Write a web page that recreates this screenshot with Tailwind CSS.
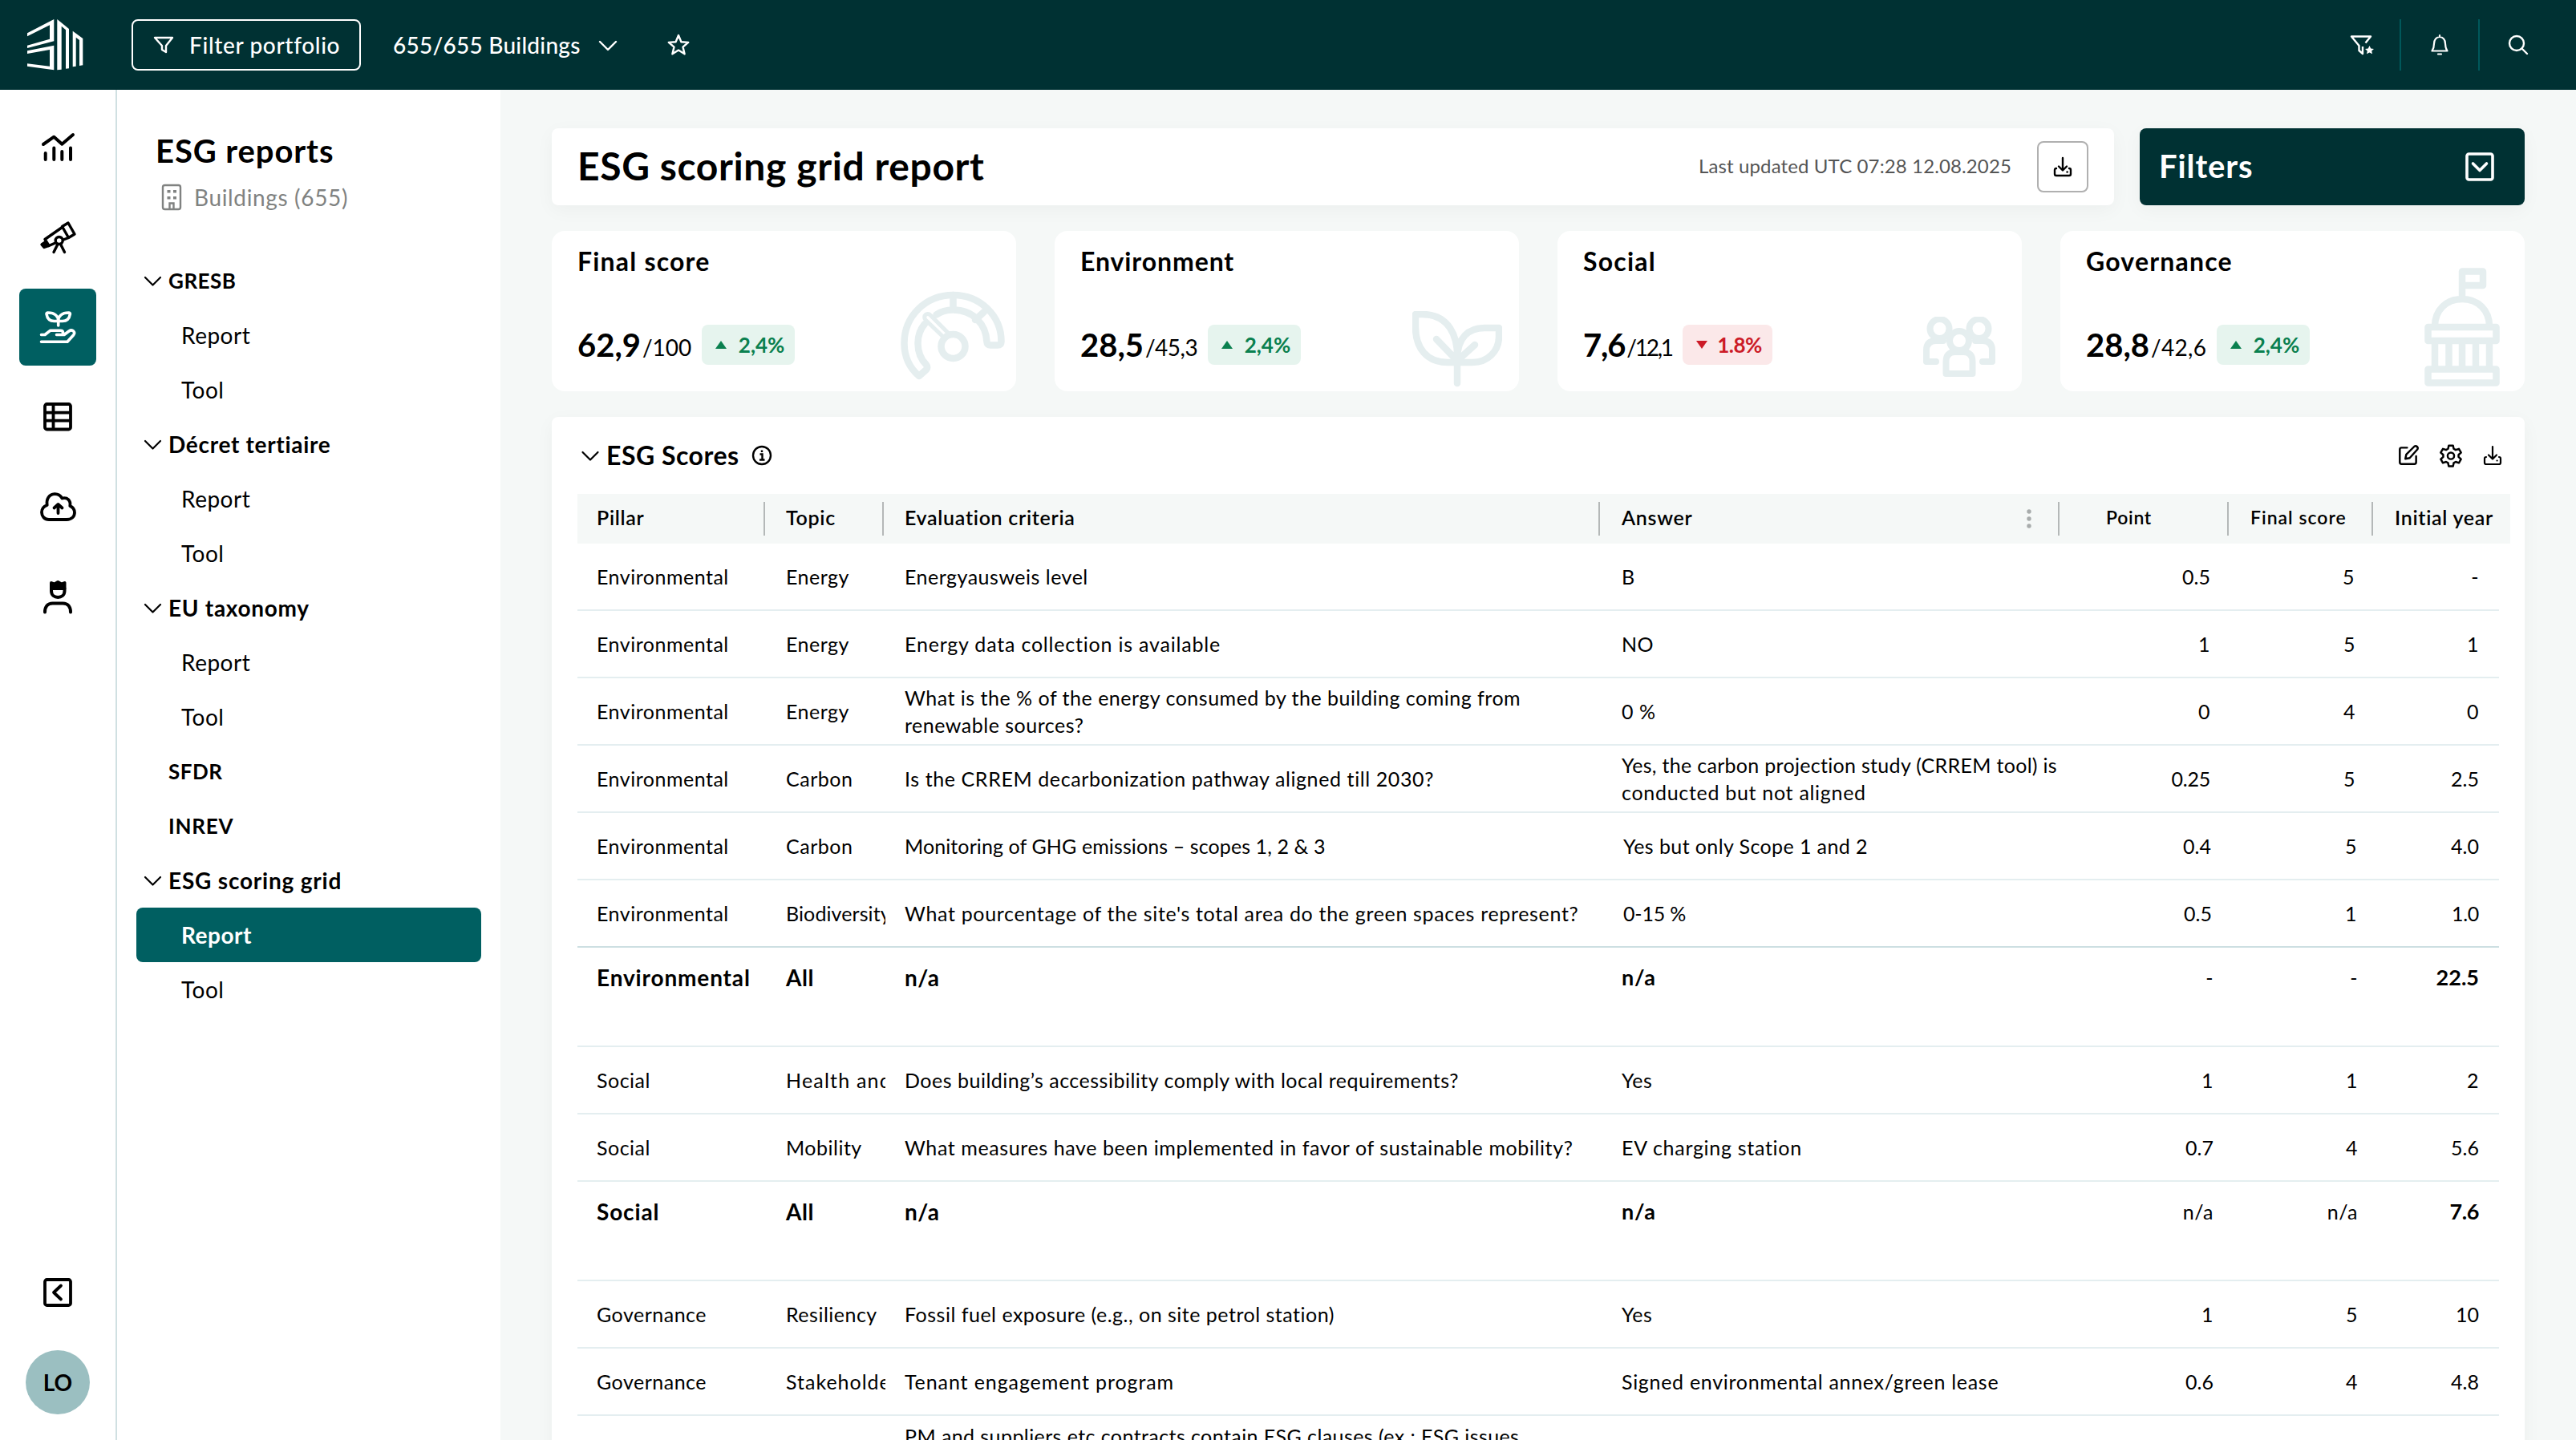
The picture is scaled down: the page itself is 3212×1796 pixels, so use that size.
<!DOCTYPE html>
<html lang="en">
<head>
  <meta charset="UTF-8">
  <title>ESG scoring grid report</title>
  <script src="https://cdn.jsdelivr.net/npm/@tailwindcss/browser@4"></script>
</head>
<body class="h-screen overflow-hidden bg-[#f5f8f7] font-[Lato,'Open_Sans',sans-serif] text-[28px] text-black flex flex-col">

  <!-- Top bar -->
  <header class="h-28 shrink-0 bg-[#003133] text-white flex items-center pl-[34px] pr-[56px]">
    <svg class="w-[70px] h-16" viewBox="0 0 70 64" fill="currentColor">
      <path d="M33.3 0L0 17.3v4L28 7.3v17.4L0 32.7V36l33.3-8.7z" />
      <path d="M0 39.3l33.3-6.6v30.6L0 58.7v-3.4l28 3.4V38L0 43z" />
      <path d="M37.3 0L52 12v49.3l-4 .5V13.3l-5.3-4.6v54l-5.4.6z" />
      <path d="M56.7 14.7L69.3 24v33.3L65 58V26l-4.3-3.3v36l-4 .6z" />
    </svg>
    <button class="ml-[60px] w-[286px] h-16 border-2 border-white rounded-lg flex items-center pl-[24px] font-medium">
      <svg class="w-7 h-7 mr-[18px]" viewBox="0 0 28 28" fill="none" stroke="currentColor" stroke-width="2.4" stroke-linejoin="round">
        <path d="M3 5h22l-8 10v8l-5-3v-5z" />
      </svg>
      <span class="whitespace-nowrap tracking-[0.65px]">Filter portfolio</span>
    </button>
    <span class="ml-[40px] w-[234px] font-medium whitespace-nowrap tracking-[0.25px]">655/655 Buildings</span>
    <svg class="ml-[20px] w-7 h-7" viewBox="0 0 28 28" fill="none" stroke="currentColor" stroke-width="2.4" stroke-linecap="round" stroke-linejoin="round">
      <path d="M4 10l10 10 10-10" />
    </svg>
    <svg class="ml-[58px] w-8 h-8" viewBox="0 0 32 32" fill="none" stroke="currentColor" stroke-width="2.4" stroke-linejoin="round">
      <path d="M16 4l3.4 8.2 8.8.7-6.7 5.7 2.1 8.7-7.6-4.7-7.6 4.7 2.1-8.7-6.7-5.7 8.8-.7z" />
    </svg>
    <div class="ml-auto flex items-center">
      <svg class="w-8 h-8" viewBox="0 0 32 32" fill="none" stroke="currentColor" stroke-width="2.4" stroke-linejoin="round">
        <path d="M18 18v9l-4.500-4V17L4 5.500h24l-6.500 8" />
        <path d="M26.500 17l1.700 3.500 3.800.4-2.800 2.600.8 3.800-3.500-1.900-3.500 1.900.8-3.800-2.800-2.600 3.800-.4z" fill="currentColor" stroke="none" />
      </svg>
      <span class="ml-[32px] w-0.5 h-16 bg-[#00585b]"></span>
      <svg class="mx-[32px] w-8 h-8" viewBox="0 0 32 32" fill="none" stroke="currentColor" stroke-width="2.2" stroke-linecap="round" stroke-linejoin="round">
        <path d="M16 4v2M6.500 23.500h19c-2-3-2.500-5-2.500-9 0-5-3-8.500-7-8.500s-7 3.500-7 8.500c0 4-.5 6-2.500 9zM14 27.500h4" />
      </svg>
      <span class="w-0.5 h-16 bg-[#00585b]"></span>
      <svg class="ml-[32px] w-8 h-8" viewBox="0 0 32 32" fill="none" stroke="currentColor" stroke-width="2.4" stroke-linecap="round">
        <circle cx="14" cy="14" r="9" />
        <path d="M20.500 20.500l6.500 6.500" />
      </svg>
    </div>
  </header>

  <div class="flex flex-1 min-h-0">

    <!-- Icon rail -->
    <nav class="w-[146px] shrink-0 bg-white border-r-2 border-[#d0e0e2] flex flex-col items-center pt-6 pb-8">
      <div class="flex flex-col gap-4">
        <a class="w-24 h-24 rounded-lg flex items-center justify-center">
          <svg class="w-12 h-12" viewBox="0 0 48 48" fill="none" stroke="currentColor" stroke-width="4" stroke-linecap="round" stroke-linejoin="round">
            <path d="M6 20l13.300-9.300 10 9L43 8M8.700 31v8M19.300 24.500V39M29.300 29v10M40 24.500V39" />
          </svg>
        </a>
        <a class="w-24 h-24 rounded-lg flex items-center justify-center">
          <svg class="w-12 h-12" viewBox="0 0 48 48" fill="none" stroke="currentColor" stroke-width="3.400" stroke-linecap="round" stroke-linejoin="round">
            <path d="M29.500 10.500L37 6l8 14-7.500 4.500zM29.500 11.500L8 26.500l5 8 8-3.500M31 27l6.500-2.500" />
            <path d="M4 33l4.500-3 3 5-4.500 1.500z" fill="currentColor" />
            <circle cx="25.700" cy="28" r="4.500" />
            <path d="M23.500 33.500l-4.500 9M28 33.500l4.500 9" />
          </svg>
        </a>
        <a class="w-24 h-24 rounded-lg flex items-center justify-center bg-[#005f61] text-white">
          <svg class="w-12 h-12" viewBox="0 0 48 48" fill="none" stroke="currentColor" stroke-width="3.600" stroke-linecap="round" stroke-linejoin="round">
            <path d="M24.700 22v-6M24.700 16.500c0-6-4-10.500-13-10.500-1.200 0-1.700.5-1.700 1.700 1 6 4.500 8.800 9.500 8.800zM24.700 16.500c0-6 4-10.500 13-10.500 1.200 0 1.700.5 1.700 1.700-1 6-4.500 8.800-9.500 8.800z" />
            <path d="M3.500 33.500H8l6.500-5.200h13c4 0 4 5.200.5 5.200h-5.500 9.500l6-4.500c4.500-3 8.500 1.500 5.500 5l-7.500 8.300H3.500" />
          </svg>
        </a>
        <a class="w-24 h-24 rounded-lg flex items-center justify-center">
          <svg class="w-12 h-12" viewBox="0 0 48 48" fill="none" stroke="currentColor" stroke-width="3.800" stroke-linejoin="round">
            <rect x="8" y="8" width="32" height="31.500" rx="2.500" />
            <path d="M18.500 8v31M8 18.700h32M8 28.700h32" />
          </svg>
        </a>
        <a class="w-24 h-24 rounded-lg flex items-center justify-center">
          <svg class="w-12 h-12" viewBox="0 0 48 48" fill="none" stroke="currentColor" stroke-width="3.800" stroke-linecap="round" stroke-linejoin="round">
            <path d="M13 40h22c6.500 0 10-4 10-8.800 0-4-2.500-6.700-5.700-8.200 1.200-7-3.300-11-9.800-9.500C27 9.500 23.500 8 20 8.200 13 8.700 9.500 14.500 10.700 22 6.500 23.500 4 26.500 4 31c0 5 3.500 9 9 9z" />
            <path d="M24.500 32V21.500M19.500 25.500l5-4.500 5 4.500" />
          </svg>
        </a>
        <a class="w-24 h-24 rounded-lg flex items-center justify-center">
          <svg class="w-12 h-12" viewBox="0 0 48 48" fill="none" stroke="currentColor" stroke-width="4" stroke-linecap="round" stroke-linejoin="round">
            <path d="M16 14v3c0 10.500 16.500 10.500 16.500 0v-3z" />
            <path d="M16 7l4 1.500 4.200-2.500 4.300 2.500 4-1.500v7H16z" fill="currentColor" />
            <path d="M8 43.500c0-7 3.500-11 9.500-11h13c6 0 9.500 4 9.500 11" />
          </svg>
        </a>
      </div>
      <div class="mt-auto flex flex-col items-center gap-12">
        <svg class="w-12 h-12" viewBox="0 0 48 48" fill="none" stroke="currentColor" stroke-width="3.800" stroke-linecap="round" stroke-linejoin="round">
          <rect x="8" y="8" width="32" height="32" rx="2.500" />
          <path d="M28 15.500L19 24l9 8.500" />
        </svg>
        <div class="w-20 h-20 rounded-full bg-[#9bbfc1] flex items-center justify-center font-bold">LO</div>
      </div>
    </nav>

    <!-- Section navigation -->
    <aside class="w-[478px] shrink-0 bg-white px-6 pt-[52px]">
      <h2 class="pl-[24px] text-[40px] leading-[48px] font-bold tracking-[0.9px]">ESG reports</h2>
      <div class="mt-[14px] pl-[30px] h-10 flex items-center text-[#808281] tracking-[0.65px]">
        <svg class="w-7 h-9 mr-[14px]" viewBox="0 0 28 36" fill="none" stroke="currentColor" stroke-width="2.400">
          <rect x="3" y="3" width="22" height="30" rx="2.500" />
          <path d="M11.500 33v-7.500h5V33" />
          <path d="M8.500 9h4v3.500h-4zM16 9h4v3.500h-4zM8.500 17h4v3.500h-4zM16 17h4v3.500h-4z" fill="currentColor" stroke="none" />
        </svg>
        Buildings (655)
      </div>
      <ul class="mt-[50px] leading-[68px] tracking-[0.5px]">
        <li class="h-[68px] flex items-center gap-2 pl-2 font-bold text-[26px]">
          <svg class="w-6 h-6" viewBox="0 0 24 24" fill="none" stroke="currentColor" stroke-width="2.200" stroke-linecap="round" stroke-linejoin="round"><path d="M3 8l9.500 9.500L22 8" /></svg>
          GRESB
        </li>
        <li class="h-[68px] pl-[56px]">Report</li>
        <li class="h-[68px] pl-[56px]">Tool</li>
        <li class="h-[68px] flex items-center gap-2 pl-2 font-bold tracking-[0.7px]">
          <svg class="w-6 h-6" viewBox="0 0 24 24" fill="none" stroke="currentColor" stroke-width="2.200" stroke-linecap="round" stroke-linejoin="round"><path d="M3 8l9.500 9.500L22 8" /></svg>
          Décret tertiaire
        </li>
        <li class="h-[68px] pl-[56px]">Report</li>
        <li class="h-[68px] pl-[56px]">Tool</li>
        <li class="h-[68px] flex items-center gap-2 pl-2 font-bold tracking-[0.7px]">
          <svg class="w-6 h-6" viewBox="0 0 24 24" fill="none" stroke="currentColor" stroke-width="2.200" stroke-linecap="round" stroke-linejoin="round"><path d="M3 8l9.500 9.500L22 8" /></svg>
          EU taxonomy
        </li>
        <li class="h-[68px] pl-[56px]">Report</li>
        <li class="h-[68px] pl-[56px]">Tool</li>
        <li class="h-[68px] pl-10 font-bold text-[26px]">SFDR</li>
        <li class="h-[68px] pl-10 font-bold text-[26px] tracking-[0.8px]">INREV</li>
        <li class="h-[68px] flex items-center gap-2 pl-2 font-bold tracking-[0.8px]">
          <svg class="w-6 h-6" viewBox="0 0 24 24" fill="none" stroke="currentColor" stroke-width="2.200" stroke-linecap="round" stroke-linejoin="round"><path d="M3 8l9.500 9.500L22 8" /></svg>
          ESG scoring grid
        </li>
        <li class="h-[68px] pl-[56px] rounded-lg bg-[#005f61] text-white font-bold">Report</li>
        <li class="h-[68px] pl-[56px]">Tool</li>
      </ul>
    </aside>

    <main class="flex-1 min-w-0 pl-16 pr-16 pt-12 flex flex-col gap-8">

      <!-- Title and filters -->
      <div class="flex gap-8 h-24 shrink-0">
        <div class="flex-1 bg-white rounded-lg shadow-[0_6px_24px_rgba(0,0,0,0.04)] flex items-center px-8">
          <h1 class="pb-[3px] text-[48px] font-bold whitespace-nowrap tracking-[0.6px]">ESG scoring grid report</h1>
          <span class="ml-auto pb-0.5 text-[24px] text-[#555] whitespace-nowrap tracking-[0.12px]">Last updated UTC 07:28 12.08.2025</span>
          <button class="ml-[32px] w-16 h-16 border-2 border-[#b0b0b0] rounded-lg flex items-center justify-center">
            <svg class="w-7 h-7" viewBox="0 0 28 28" fill="none" stroke="currentColor" stroke-width="2.400" stroke-linecap="round" stroke-linejoin="round">
              <path d="M14 3v15M9 13.500l5 5 5-5M6 16c-1.500 0-2 .7-2 2v5c0 1.500.7 2 2 2h16c1.300 0 2-.5 2-2v-5c0-1.300-.5-2-2-2M19.500 20.500h.2" />
            </svg>
          </button>
        </div>
        <div class="w-[480px] bg-[#003133] text-white rounded-lg shadow-[0_6px_24px_rgba(0,0,0,0.04)] flex items-center justify-between pl-6 pr-8">
          <span class="pb-0.5 text-[40px] font-bold tracking-[0.9px]">Filters</span>
          <svg class="w-12 h-12" viewBox="0 0 48 48" fill="none" stroke="currentColor" stroke-width="3.600" stroke-linecap="round" stroke-linejoin="round">
            <rect x="8" y="8" width="32" height="32" rx="2.500" />
            <path d="M15.500 20l8.500 8.500 8.500-8.500" />
          </svg>
        </div>
      </div>

      <!-- Score cards -->
      <div class="grid grid-cols-4 gap-12 h-[200px] shrink-0">
        <div class="relative bg-white rounded-2xl px-8 pt-[18px] pb-[30px] flex flex-col justify-between">
          <h3 class="text-[32px] leading-10 font-bold tracking-[1.2px]">Final score</h3>
          <div class="flex items-center leading-[50px]">
            <span class="text-[40px] font-bold">62,9</span>
            <span class="ml-0.5 pt-[6px]">/100</span>
            <span class="ml-[13px] h-[50px] w-[116px] rounded-lg bg-[#e6f4ee] text-[#0a804f] text-[26px] font-bold flex items-center justify-between pl-4 pr-[13px]">
              <svg class="w-4 h-3" viewBox="0 0 16 12" fill="currentColor"><path d="M8 1l7 10H1z" /></svg>
              2,4%
            </span>
          </div>
          <svg class="absolute right-[11px] top-[74px] w-[134px] h-[114px]" viewBox="0 0 134 114" fill="none" stroke="#e5eeef" stroke-width="8.500" stroke-linecap="round" stroke-linejoin="round">
            <path d="M24 107C10 95 5.500 81 5.500 66c0-34 27-60 61-60s60 26 60 58c0 3-1.500 4.500-4.500 4.500h-9c-3 0-4.500-1.500-4.500-4-1-22-17-40-42-40-9 0-16 2.500-21 6M31 42c-6 7-8.500 15-8.500 24 0 11 3.500 20 10.500 27 1.500 2 1.500 4 0 6l-9 8" />
            <path d="M66.500 6v17M94 37l11-10" />
            <circle cx="66.500" cy="70" r="15" />
            <path d="M56 60L32 37c-4-5 2-10 6-6l24 24" stroke-width="5" />
          </svg>
        </div>
        <div class="relative bg-white rounded-2xl px-8 pt-[18px] pb-[30px] flex flex-col justify-between">
          <h3 class="text-[32px] leading-10 font-bold tracking-[0.9px]">Environment</h3>
          <div class="flex items-center leading-[50px]">
            <span class="text-[40px] font-bold">28,5</span>
            <span class="ml-0.5 pt-[6px] tracking-[-0.5px]">/45,3</span>
            <span class="ml-[13px] h-[50px] w-[116px] rounded-lg bg-[#e6f4ee] text-[#0a804f] text-[26px] font-bold flex items-center justify-between pl-4 pr-[13px]">
              <svg class="w-4 h-3" viewBox="0 0 16 12" fill="currentColor"><path d="M8 1l7 10H1z" /></svg>
              2,4%
            </span>
          </div>
          <svg class="absolute right-[21px] top-[100px] w-28 h-24" viewBox="0 0 112 96" fill="none" stroke="#e5eeef" stroke-width="8.500" stroke-linecap="round" stroke-linejoin="round">
            <path d="M56 90V60M56 64C58 30 45 4 12 4H4v16c0 26 14 44 40 44h31c19 0 33-14 33-32V21H90C70 21 56 33 56 60M56 62L30 35M56 62l22-20" />
          </svg>
        </div>
        <div class="relative bg-white rounded-2xl px-8 pt-[18px] pb-[30px] flex flex-col justify-between">
          <h3 class="text-[32px] leading-10 font-bold tracking-[1.2px]">Social</h3>
          <div class="flex items-center leading-[50px]">
            <span class="text-[40px] font-bold tracking-[-1.2px]">7,6</span>
            <span class="ml-0.5 pt-[6px] tracking-[-2.2px]">/12,1</span>
            <span class="ml-[13px] h-[50px] w-[112px] rounded-lg bg-[#fbe8e9] text-[#cc1b27] text-[26px] font-bold tracking-[-0.5px] flex items-center justify-between pl-4 pr-[13px]">
              <svg class="w-4 h-3" viewBox="0 0 16 12" fill="currentColor"><path d="M8 11L1 1h14z" /></svg>
              1.8%
            </span>
          </div>
          <svg class="absolute right-[33px] top-[107px] w-[90px] h-[76px]" viewBox="0 0 90 76" fill="none" stroke="#e5eeef" stroke-width="8" stroke-linecap="round" stroke-linejoin="round">
            <circle cx="20.500" cy="15" r="12" />
            <circle cx="69.500" cy="15" r="12" />
            <circle cx="45" cy="30" r="12" />
            <path d="M28.500 71V56c0-8 4-12 11-12h11c7 0 11 4 11 12v15zM25 30H16C8 30 4 34 4 42v14h12M65 30h9c8 0 12 4 12 12v14H74" />
          </svg>
        </div>
        <div class="relative bg-white rounded-2xl px-8 pt-[18px] pb-[30px] flex flex-col justify-between">
          <h3 class="text-[32px] leading-10 font-bold tracking-[1.2px]">Governance</h3>
          <div class="flex items-center leading-[50px]">
            <span class="text-[40px] font-bold">28,8</span>
            <span class="ml-0.5 pt-[6px] tracking-[0.3px]">/42,6</span>
            <span class="ml-[13px] h-[50px] w-[116px] rounded-lg bg-[#e6f4ee] text-[#0a804f] text-[26px] font-bold flex items-center justify-between pl-4 pr-[13px]">
              <svg class="w-4 h-3" viewBox="0 0 16 12" fill="currentColor"><path d="M8 1l7 10H1z" /></svg>
              2,4%
            </span>
          </div>
          <svg class="absolute right-[31px] top-[46px] w-[94px] h-[148px]" viewBox="0 0 94 148" fill="none" stroke="#e5eeef" stroke-width="8.500" stroke-linejoin="round">
            <path d="M47 40V4.500h26V22H47M13 73c0-20 14-34 34-34s34 14 34 34M4.500 74h85v17h-85zM4.500 126.500h85v17h-85zM13 92v34M30.500 92v34M47 92v34M64 92v34M81 92v34" />
          </svg>
        </div>
      </div>

      <!-- ESG scores table -->
      <section class="flex-1 bg-white rounded-t-lg shadow-[0_6px_24px_rgba(0,0,0,0.04)] pl-8 pr-[18px]">
        <div class="h-24 flex items-center pl-1">
          <svg class="w-6 h-6" viewBox="0 0 24 24" fill="none" stroke="currentColor" stroke-width="2.200" stroke-linecap="round" stroke-linejoin="round"><path d="M2.500 8l9.500 9.500L21.500 8" /></svg>
          <h2 class="ml-2 text-[32px] font-bold whitespace-nowrap tracking-[0.5px]">ESG Scores</h2>
          <svg class="ml-[14px] w-7 h-7" viewBox="0 0 28 28" fill="none" stroke="currentColor" stroke-width="2.400">
            <circle cx="14" cy="14" r="11" />
            <path d="M11.500 12.500H14.500V19M11 19.500h6.500M14 7.500v2.500" />
          </svg>
          <div class="ml-auto mr-[8px] flex items-center gap-[23px]">
            <svg class="w-[30px] h-[30px]" viewBox="0 0 28 28" fill="none" stroke="currentColor" stroke-width="2.300" stroke-linecap="round" stroke-linejoin="round">
              <path d="M12.500 5H6C4.500 5 4 5.700 4 7v15c0 1.500.7 2 2 2h15c1.500 0 2-.7 2-2v-7" />
              <path d="M10.500 18l1-5L21 3.500c2-1.500 5 1 3.500 3.500L15.500 17z" />
            </svg>
            <svg class="w-[30px] h-[30px]" viewBox="0 0 28 28" fill="none" stroke="currentColor" stroke-width="2.300" stroke-linejoin="round">
              <path d="M11.500 2.500h5l.8 3.800 2.300 1.300 3.700-1.200 2.500 4.300-2.900 2.600v2.500l2.900 2.600-2.500 4.300-3.700-1.200-2.300 1.300-.8 3.800h-5l-.8-3.800-2.300-1.300-3.700 1.200-2.500-4.300 2.900-2.600v-2.500l-2.900-2.600 2.500-4.300 3.700 1.200 2.300-1.300z" />
              <circle cx="14" cy="14.500" r="3.800" />
            </svg>
            <svg class="w-7 h-7" viewBox="0 0 28 28" fill="none" stroke="currentColor" stroke-width="2.200" stroke-linecap="round" stroke-linejoin="round">
              <path d="M14 3v15M9 13.500l5 5 5-5M6 16c-1.500 0-2 .7-2 2v5c0 1.500.7 2 2 2h16c1.300 0 2-.5 2-2v-5c0-1.300-.5-2-2-2M19.500 20.500h.2" />
            </svg>
          </div>
        </div>

        <div class="h-[62px] bg-[#f5f8f7] flex items-center text-[25px] font-semibold whitespace-nowrap tracking-[0.7px]">
          <div class="w-[234px] h-[42px] leading-[39px] pl-6 border-r-2 border-[#b4b8b8]">Pillar</div>
          <div class="w-[148px] h-[42px] leading-[39px] pl-[26px] border-r-2 border-[#b4b8b8]">Topic</div>
          <div class="w-[893px] h-[42px] leading-[39px] pl-[26px] border-r-2 border-[#b4b8b8]">Evaluation criteria</div>
          <div class="w-[573px] h-[42px] leading-[39px] pl-[27px] pr-[33px] border-r-2 border-[#b4b8b8] flex justify-between">
            Answer
            <svg class="mt-[9px] w-1.5 h-6" viewBox="0 0 6 24" fill="#a8acac"><circle cx="3" cy="3" r="2.700" /><circle cx="3" cy="12" r="2.700" /><circle cx="3" cy="21" r="2.700" /></svg>
          </div>
          <div class="w-[211px] h-[42px] leading-[39px] pl-[58px] border-r-2 border-[#b4b8b8] text-[23px]">Point</div>
          <div class="w-[180px] h-[42px] leading-[39px] pl-[27px] border-r-2 border-[#b4b8b8] text-[23px] tracking-[1px]">Final score</div>
          <div class="h-[42px] leading-[39px] pl-[27px]">Initial year</div>
        </div>

        <div class="w-[2396px] text-[25px] leading-[34px] whitespace-nowrap tracking-[0.5px]">
          <div class="h-[84px] grid grid-cols-[260px_124px_918px_568px_166px_180px_155px] items-center border-b-2 border-[#e4eef0]">
            <div class="pl-6">Environmental</div><div>Energy</div>
            <div class="pl-6">Energyausweis level</div>
            <div>B</div>
            <div class="text-right tracking-normal">0.5</div><div class="text-right">5</div><div class="text-right">-</div>
          </div>
          <div class="h-[84px] grid grid-cols-[260px_124px_918px_568px_166px_181px_154px] items-center border-b-2 border-[#e4eef0]">
            <div class="pl-6">Environmental</div><div>Energy</div>
            <div class="pl-6 tracking-[0.8px]">Energy data collection is available</div>
            <div>NO</div>
            <div class="text-right">1</div><div class="text-right">5</div><div class="text-right">1</div>
          </div>
          <div class="h-[84px] grid grid-cols-[260px_124px_918px_568px_166px_181px_154px] items-center border-b-2 border-[#e4eef0]">
            <div class="pl-6">Environmental</div><div>Energy</div>
            <div class="pl-6">What is the % of the energy consumed by the building coming from<br>renewable sources?</div>
            <div>0 %</div>
            <div class="text-right">0</div><div class="text-right">4</div><div class="text-right">0</div>
          </div>
          <div class="h-[84px] grid grid-cols-[260px_124px_918px_568px_166px_181px_154px] items-center border-b-2 border-[#e4eef0]">
            <div class="pl-6">Environmental</div><div>Carbon</div>
            <div class="pl-6 tracking-[0.6px]">Is the CRREM decarbonization pathway aligned till 2030?</div>
            <div><span class="tracking-[0.3px]">Yes, the carbon projection study (CRREM tool) is</span><br><span class="tracking-[0.7px]">conducted but not aligned</span></div>
            <div class="text-right tracking-[-0.2px]">0.25</div><div class="text-right">5</div><div class="text-right tracking-normal">2.5</div>
          </div>
          <div class="h-[84px] grid grid-cols-[260px_124px_918px_568px_167px_182px_152px] items-center border-b-2 border-[#e4eef0]">
            <div class="pl-6">Environmental</div><div>Carbon</div>
            <div class="pl-6 tracking-[0.1px]">Monitoring of GHG emissions – scopes 1, 2 &amp; 3</div>
            <div class="pl-0.5 tracking-[0.4px]">Yes but only Scope 1 and 2</div>
            <div class="text-right tracking-normal">0.4</div><div class="text-right">5</div><div class="text-right tracking-normal">4.0</div>
          </div>
          <div class="h-[84px] grid grid-cols-[260px_124px_918px_568px_168px_181px_152px] items-center border-b-2 border-[#cddfe2]">
            <div class="pl-6">Environmental</div><div class="overflow-hidden tracking-[0.1px]">Biodiversity</div>
            <div class="pl-6 tracking-[0.67px]">What pourcentage of the site's total area do the green spaces represent?</div>
            <div class="pl-0.5 tracking-[-0.2px]">0-15 %</div>
            <div class="text-right tracking-normal">0.5</div><div class="text-right">1</div><div class="text-right tracking-[-0.3px]">1.0</div>
          </div>
          <div class="h-[124px] pt-[20px] grid grid-cols-[260px_124px_918px_568px_170px_180px_151px] items-start border-b-2 border-[#e4eef0]">
            <div class="pl-6 text-[28px] font-bold tracking-[0.85px]">Environmental</div><div class="text-[28px] font-bold">All</div>
            <div class="pl-6 text-[28px] font-bold">n/a</div>
            <div class="text-[27px] font-bold tracking-[0.8px]">n/a</div>
            <div class="text-right">-</div><div class="text-right">-</div><div class="text-right text-[27px] font-bold tracking-normal">22.5</div>
          </div>
          <div class="h-[84px] grid grid-cols-[260px_124px_918px_568px_170px_180px_151px] items-center border-b-2 border-[#e4eef0]">
            <div class="pl-6">Social</div><div class="overflow-hidden tracking-[1.2px]">Health and</div>
            <div class="pl-6">Does building’s accessibility comply with local requirements?</div>
            <div>Yes</div>
            <div class="text-right">1</div><div class="text-right">1</div><div class="text-right">2</div>
          </div>
          <div class="h-[84px] grid grid-cols-[260px_124px_918px_568px_170px_180px_151px] items-center border-b-2 border-[#e4eef0]">
            <div class="pl-6">Social</div><div>Mobility</div>
            <div class="pl-6 tracking-[0.6px]">What measures have been implemented in favor of sustainable mobility?</div>
            <div class="tracking-[0.7px]">EV charging station</div>
            <div class="text-right tracking-normal">0.7</div><div class="text-right">4</div><div class="text-right tracking-normal">5.6</div>
          </div>
          <div class="h-[124px] pt-[20px] grid grid-cols-[260px_124px_918px_568px_170px_180px_151px] items-start border-b-2 border-[#e4eef0]">
            <div class="pl-6 text-[28px] font-bold tracking-[0.85px]">Social</div><div class="text-[28px] font-bold">All</div>
            <div class="pl-6 text-[28px] font-bold">n/a</div>
            <div class="text-[27px] font-bold tracking-[0.8px]">n/a</div>
            <div class="text-right">n/a</div><div class="text-right">n/a</div><div class="text-right text-[27px] font-bold tracking-[-0.4px]">7.6</div>
          </div>
          <div class="h-[84px] grid grid-cols-[260px_124px_918px_568px_170px_180px_151px] items-center border-b-2 border-[#e4eef0]">
            <div class="pl-6">Governance</div><div>Resiliency</div>
            <div class="pl-6">Fossil fuel exposure (e.g., on site petrol station)</div>
            <div>Yes</div>
            <div class="text-right">1</div><div class="text-right">5</div><div class="text-right tracking-normal">10</div>
          </div>
          <div class="h-[84px] grid grid-cols-[260px_124px_918px_568px_170px_180px_151px] items-center border-b-2 border-[#e4eef0]">
            <div class="pl-6">Governance</div><div class="overflow-hidden tracking-[1px]">Stakeholders</div>
            <div class="pl-6 tracking-[0.9px]">Tenant engagement program</div>
            <div class="tracking-[0.7px]">Signed environmental annex/green lease</div>
            <div class="text-right tracking-normal">0.6</div><div class="text-right">4</div><div class="text-right tracking-normal">4.8</div>
          </div>
          <div class="h-[84px] pt-2 grid grid-cols-[260px_124px_918px_568px_170px_180px_151px] items-start">
            <div></div><div></div>
            <div class="pl-6 tracking-[0.42px]">PM and suppliers etc contracts contain ESG clauses (ex : ESG issues,</div>
          </div>
        </div>
      </section>
    </main>
  </div>
</body>
</html>
